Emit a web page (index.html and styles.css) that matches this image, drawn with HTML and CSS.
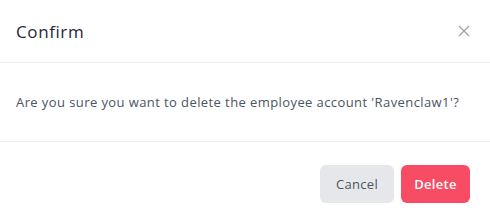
FILE: index.html
```html
<!DOCTYPE html>
<html>
<head>
<meta charset="utf-8">
<link rel="stylesheet" href="styles.css">
</head>
<body>
<div class="dialog">
  <div class="header">
    <h2 class="title">Confirm</h2>
    <button class="close" aria-label="Close">
      <svg width="12" height="12" viewBox="0 0 12 12"><path d="M1 1L11 11M11 1L1 11" stroke="#9ca3af" stroke-width="1.3" fill="none"/></svg>
    </button>
  </div>
  <div class="body">
    <p class="message">Are you sure you want to delete the employee account 'Ravenclaw1'?</p>
  </div>
  <div class="footer">
    <button class="btn btn-cancel">Cancel</button>
    <button class="btn btn-delete">Delete</button>
  </div>
</div>
</body>
</html>
```
FILE: styles.css
```css
html, body {
  margin: 0;
  padding: 0;
  background: #ffffff;
}
body {
  font-family: "Open Sans", "Liberation Sans", sans-serif;
  width: 490px;
  height: 217px;
  overflow: hidden;
}
.dialog {
  background: #fff;
  display: flex;
  flex-direction: column;
}
.header {
  height: 62px;
  border-bottom: 1px solid #ececec;
  display: flex;
  align-items: center;
  justify-content: space-between;
  padding: 0 20px 0 16px;
}
.title {
  margin: 0;
  font-size: 17px;
  font-weight: 400;
  color: #1f2937;
  letter-spacing: 0.6px;
}
.close {
  border: none;
  background: none;
  padding: 0;
  width: 12px;
  height: 12px;
  display: flex;
  cursor: pointer;
}
.body {
  height: 78px;
  border-bottom: 1px solid #ececec;
  display: flex;
  align-items: center;
  padding: 0 16px;
}
.message {
  margin: 0;
  font-size: 13px;
  color: #4b5563;
  letter-spacing: 0.41px;
}
.footer {
  display: flex;
  justify-content: flex-end;
  gap: 7px;
  padding: 23px 20px 0 0;
}
.btn {
  height: 38px;
  border: none;
  border-radius: 6px;
  font-family: inherit;
  font-size: 13px;
  padding: 0;
  cursor: pointer;
  letter-spacing: 0.3px;
}
.btn-cancel {
  width: 74px;
  background: #e5e7eb;
  color: #4b5563;
}
.btn-delete {
  width: 69px;
  background: #f74c63;
  color: #ffffff;
  font-weight: 600;
}
```
